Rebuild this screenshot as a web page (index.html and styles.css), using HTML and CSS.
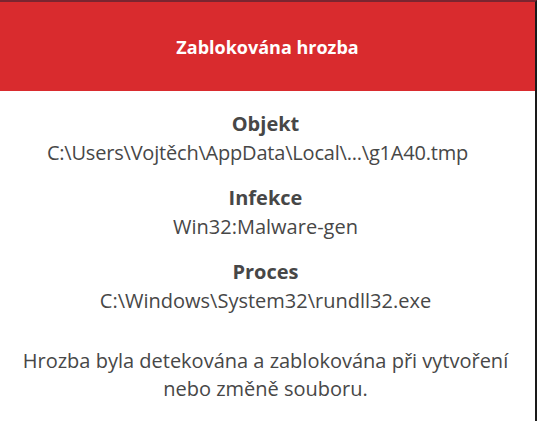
FILE: index.html
```html
<!DOCTYPE html>
<html>
    <head>
        <meta charset="UTF-8">
        <title>Zablokována hrozba</title>
        <link rel="stylesheet" href="styles.css">
    </head>
    <body>
        <div class="dialog">
            <div class="header">
                <h1>Zablokována hrozba</h1>
            </div>
            <div class="content">
                <div class="field">
                    <h3>Objekt</h3>
                    <div class="value value-path">C:\Users\Vojtěch\AppData\Local\...\g1A40.tmp</div>
                </div>
                <div class="field">
                    <h3>Infekce</h3>
                    <div class="value">Win32:Malware-gen</div>
                </div>
                <div class="field">
                    <h3>Proces</h3>
                    <div class="value">C:\Windows\System32\rundll32.exe</div>
                </div>
                <p class="note">Hrozba byla detekována a zablokována při vytvoření nebo změně souboru.</p>
            </div>
        </div>
    </body>
</html>
```

FILE: styles.css
```css
body {
    font-family: "Open Sans", "Noto Sans", sans-serif;
    margin: 0;
    padding: 0;
    color: #474747;
    background: #fff;
}
h1, h3, p {
    margin: 0
}
.dialog {
    width: 535px;
    height: 419px;
    border-top: 2px solid #7a2530;
    border-right: 2px solid #1a1a1a;
    background: #fff;
}
.header {
    height: 89px;
    background: #d92b2e;
    display: flex;
    align-items: center;
    justify-content: center;
}
.header h1 {
    color: #fff;
    font-size: 18px;
    font-weight: 700;
}
.content {
    padding: 18px 24px 0 20px;
    text-align: center;
    font-size: 20px;
    line-height: 29px;
}
.field {
    margin-bottom: 16px;
}
.field h3 {
    font-size: 20px;
    font-weight: 700;
}
.value-path {
    padding-right: 16px;
    letter-spacing: -0.2px;
}
.note {
    margin-top: 32px;
    line-height: 28px;
}
```
